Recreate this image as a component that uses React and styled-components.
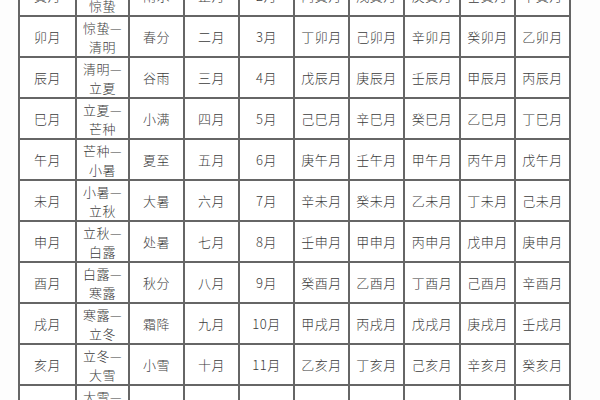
import styled, { createGlobalStyle } from 'styled-components';

const GlobalStyle = createGlobalStyle`
  html, body {
    margin: 0;
    padding: 0;
    background: #fdfdfd;
  }
`;

const Page = styled.div`
  width: 600px;
  height: 400px;
  overflow: hidden;
  padding-left: 18px;
  box-sizing: border-box;
  background: #fdfdfd;
`;

const Table = styled.table`
  margin-top: -26px;
  border-collapse: collapse;
  table-layout: fixed;
  width: 553px;
  background: #fff;
  font-family: "Noto Sans CJK SC", "Noto Sans CJK TC", sans-serif;
  font-weight: 300;
  font-size: 13px;
  color: #3c3c3c;
`;

const Row = styled.tr`
  height: 41px;
`;

const Cell = styled.td`
  border: 2px solid #666;
  padding: 0;
  text-align: center;
  vertical-align: middle;
  line-height: ${({ $double }) => ($double ? '19px' : '16px')};
  letter-spacing: 0.5px;
  white-space: nowrap;
`;

const WIDTHS = [57, 53, 55, 55, 55, 55, 55, 56, 55, 55];

const ROWS = [
  ['寅月', '立春—', '惊蛰', '雨水', '正月', '2月', '丙寅月', '戊寅月', '庚寅月', '壬寅月', '甲寅月'],
  ['卯月', '惊蛰—', '清明', '春分', '二月', '3月', '丁卯月', '己卯月', '辛卯月', '癸卯月', '乙卯月'],
  ['辰月', '清明—', '立夏', '谷雨', '三月', '4月', '戊辰月', '庚辰月', '壬辰月', '甲辰月', '丙辰月'],
  ['巳月', '立夏—', '芒种', '小满', '四月', '5月', '己巳月', '辛巳月', '癸巳月', '乙巳月', '丁巳月'],
  ['午月', '芒种—', '小暑', '夏至', '五月', '6月', '庚午月', '壬午月', '甲午月', '丙午月', '戊午月'],
  ['未月', '小暑—', '立秋', '大暑', '六月', '7月', '辛未月', '癸未月', '乙未月', '丁未月', '己未月'],
  ['申月', '立秋—', '白露', '处暑', '七月', '8月', '壬申月', '甲申月', '丙申月', '戊申月', '庚申月'],
  ['酉月', '白露—', '寒露', '秋分', '八月', '9月', '癸酉月', '乙酉月', '丁酉月', '己酉月', '辛酉月'],
  ['戌月', '寒露—', '立冬', '霜降', '九月', '10月', '甲戌月', '丙戌月', '戊戌月', '庚戌月', '壬戌月'],
  ['亥月', '立冬—', '大雪', '小雪', '十月', '11月', '乙亥月', '丁亥月', '己亥月', '辛亥月', '癸亥月'],
  ['子月', '大雪—', '小寒', '冬至', '十一月', '12月', '丙子月', '戊子月', '庚子月', '壬子月', '甲子月'],
];

const App = () => {
  return <Page>
    <GlobalStyle />
    <Table>
      <colgroup>
        {WIDTHS.map((w, i) => <col key={i} style={{ width: w }} />)}
      </colgroup>
      <tbody>
        {
          ROWS.map((r) => {
            const [branch, from, to, ...rest] = r;
            return <Row key={branch}>
              <Cell>{branch}</Cell>
              <Cell $double>{from}<br />{to}</Cell>
              {rest.map((t, i) => <Cell key={i}>{t}</Cell>)}
            </Row>
          })
        }
      </tbody>
    </Table>
  </Page>
}

export default App;
